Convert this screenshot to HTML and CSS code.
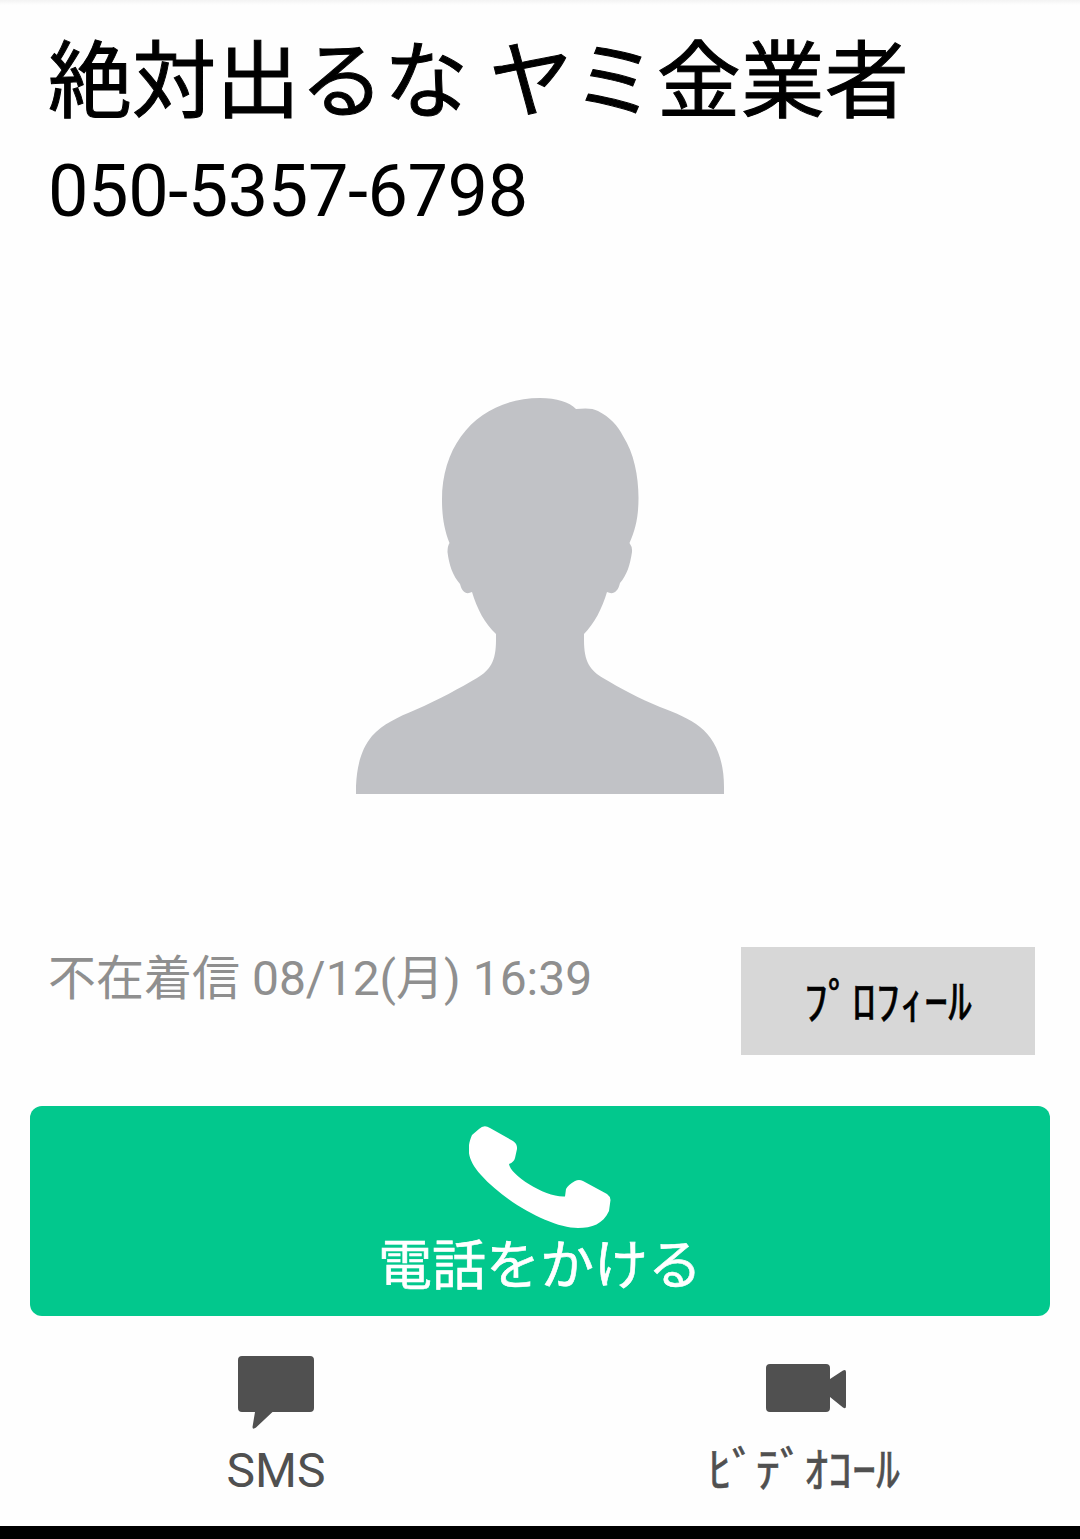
FILE: index.html
```
<!DOCTYPE html>
<html lang="ja">
<head>
    <meta charset="UTF-8">
    <meta name="viewport" content="width=device-width, initial-scale=1.0">
    <title>不在着信</title>
    <link rel="stylesheet" href="styles.css">
</head>
<body>
    <main class="screen">
        <header class="caller">
            <h1 class="caller-name">絶対出るな ヤミ金業者</h1>
            <p class="caller-number">050-5357-6798</p>
        </header>

        <div class="photo">
            <svg class="avatar" viewBox="356 398 368 396" aria-hidden="true">
                <path d="M356 794V786C357 764 362 748 372 736C383 724 398 717 415 710C440 699 460 688 477 678C490 670 496 662 496 640V634C485 624 477 609 472 592C466 595 462 592 460 584C453 576 449 565 447.500 552Q447.500 546 449.500 543C444 529 442 516 442 500C442 437 485 398 540 398C557 398 569 402 576 409C585 408 593 408 598 411C610 417 618 426 623 436C634 453 638.500 476 638.500 498C638.500 515 636 529 629.500 543Q632.500 547 632 552C630 565 627 575 620 583C618 592 613 595 607 592C602 609 594 624 584 634V640C584 662 590 670 603 678C620 688 640 699 660 707C676 713 690 719 700 727C715 739 724 759 724 787V794Z"/>
            </svg>
        </div>

        <section class="history">
            <p class="history-text">不在着信 08/12(月) 16:39</p>
            <button type="button" class="btn-profile">ﾌﾟﾛﾌｨｰﾙ</button>
        </section>

        <button type="button" class="btn-call">
            <svg class="icon-call" viewBox="469 1126 142 103" aria-hidden="true">
                <path d="M479 1129Q484 1124 490 1128L513 1141Q517.500 1144 517 1149L515 1158Q514 1162 509 1164C510 1175 546 1198 565 1196.500L566 1189Q568 1185 575 1181Q579 1179 583 1181L607 1194Q610 1196 610.500 1200L609 1211C603 1224 592 1228 578 1228C552 1228 506 1203 481 1175C466 1158 467 1147 472 1135Z"/>
            </svg>
            <span>電話をかける</span>
        </button>

        <nav class="actions">
            <button type="button" class="action">
                <svg class="icon-sms" viewBox="0 0 76 74" aria-hidden="true">
                    <path d="M4 0H72Q76 0 76 4V52Q76 56 72 56H34.500L18 71.500Q14.500 74 14.500 71L17 56H4Q0 56 0 52V4Q0 0 4 0Z"/>
                </svg>
                <span>SMS</span>
            </button>
            <button type="button" class="action">
                <svg class="icon-video" viewBox="-4 -8 84 74" aria-hidden="true">
                    <path d="M4 0H60Q64 0 64 4V15L77 6.500Q80 5 80 8V42Q80 45.500 77 43.500L64 33V44Q64 48 60 48H4Q0 48 0 44V4Q0 0 4 0Z"/>
                </svg>
                <span class="kana">ﾋﾞﾃﾞｵｺｰﾙ</span>
            </button>
        </nav>
    </main>
</body>
</html>
```
FILE: styles.css
```
* {
    box-sizing: border-box;
    margin: 0;
    padding: 0;
}

body {
    font-family: Roboto, "Noto Sans CJK JP", sans-serif;
    background-color: #fefefe;
    color: #000;
}

button {
    border: none;
    background: none;
    font-family: inherit;
    color: inherit;
    cursor: pointer;
}

svg {
    display: block;
}

.screen {
    display: flex;
    flex-direction: column;
    height: 1539px;
    border-bottom: 13px solid #000;
    background: linear-gradient(#f3f3f3, #fefefe 5px);
}

.caller {
    padding: 33px 48px 0;
    height: 249px;
}

.caller-name {
    font-size: 84px;
    font-weight: 400;
    line-height: 100px;
    white-space: nowrap;
    -webkit-text-stroke: 1px currentColor;
}

.caller-number {
    margin-top: 17px;
    font-size: 72px;
    line-height: 84px;
    letter-spacing: -0.4px;
}

.photo {
    display: flex;
    justify-content: center;
    height: 698px;
    padding-top: 149px;
}

.avatar {
    width: 368px;
    height: 396px;
    fill: #c1c2c6;
}

.history {
    display: flex;
    justify-content: space-between;
    align-items: flex-start;
    padding: 0 45px 0 48px;
}

.history-text {
    padding-top: 3px;
    font-size: 48px;
    line-height: 58px;
    color: #8f8f8f;
}

.btn-profile {
    width: 294px;
    height: 108px;
    padding-top: 3px;
    background-color: #d7d7d7;
    font-size: 48px;
    line-height: 58px;
    -webkit-text-stroke: 0.6px currentColor;
}

.btn-call {
    display: flex;
    flex-direction: column;
    align-items: center;
    height: 210px;
    margin: 51px 30px 0;
    padding-top: 20px;
    border-radius: 12px;
    background-color: #02c88d;
    color: #fff;
    font-size: 54px;
    line-height: 76px;
    -webkit-text-stroke: 0.6px currentColor;
}

.icon-call {
    width: 142px;
    height: 103px;
    fill: #fff;
}

.actions {
    display: flex;
    padding: 40px 12px 0;
}

.action {
    flex: 1;
    display: flex;
    flex-direction: column;
    align-items: center;
    color: #505050;
    font-size: 48px;
    line-height: 82px;
}

.kana {
    -webkit-text-stroke: 0.6px currentColor;
}

.icon-sms,
.icon-video {
    height: 74px;
    fill: #505050;
}
```
